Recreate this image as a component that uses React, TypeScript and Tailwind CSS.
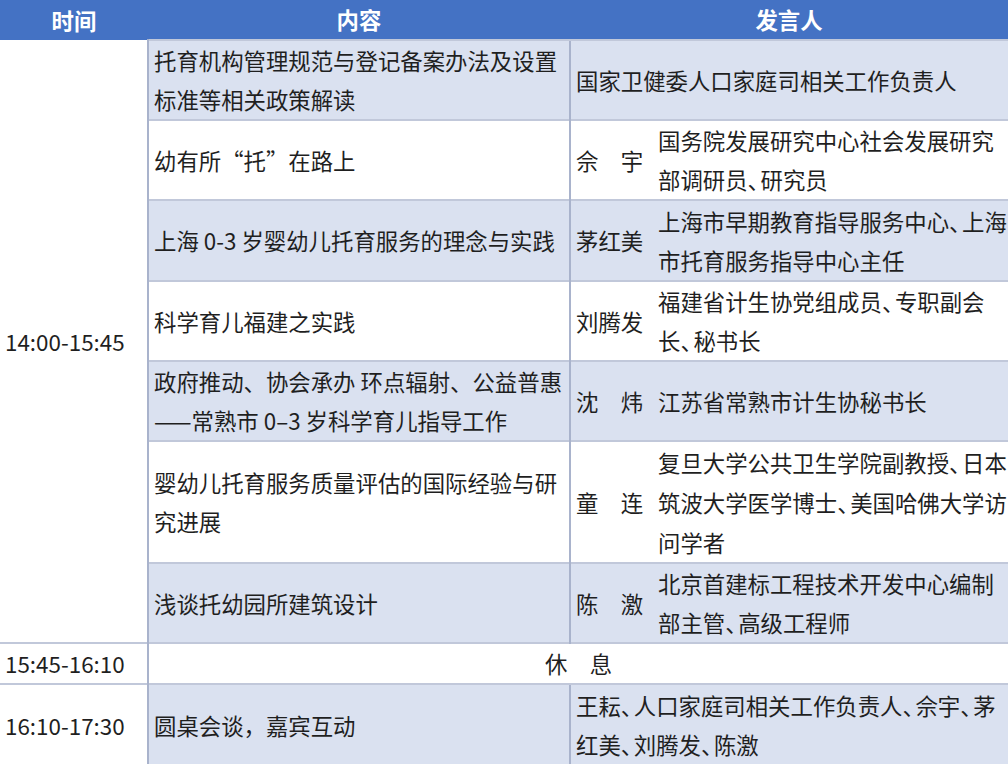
import React from 'react';

type Row = {
  content: string[];
  name?: string;
  desc: string[];
  h: string;
  blue: boolean;
};

const rows: Row[] = [
  {
    content: ['托育机构管理规范与登记备案办法及设置', '标准等相关政策解读'],
    desc: ['国家卫健委人口家庭司相关工作负责人'],
    h: 'h-[80px]',
    blue: true,
  },
  {
    content: ['幼有所“托”在路上'],
    name: '佘　宇',
    desc: ['国务院发展研究中心社会发展研究', '部调研员、研究员'],
    h: 'h-[80px]',
    blue: false,
  },
  {
    content: ['上海 0-3 岁婴幼儿托育服务的理念与实践'],
    name: '茅红美',
    desc: ['上海市早期教育指导服务中心、上海', '市托育服务指导中心主任'],
    h: 'h-[81px]',
    blue: true,
  },
  {
    content: ['科学育儿福建之实践'],
    name: '刘腾发',
    desc: ['福建省计生协党组成员、专职副会', '长、秘书长'],
    h: 'h-[80px]',
    blue: false,
  },
  {
    content: ['政府推动、协会承办 环点辐射、公益普惠', '——常熟市 0–3 岁科学育儿指导工作'],
    name: '沈　炜',
    desc: ['江苏省常熟市计生协秘书长'],
    h: 'h-[80px]',
    blue: true,
  },
  {
    content: ['婴幼儿托育服务质量评估的国际经验与研', '究进展'],
    name: '童　连',
    desc: ['复旦大学公共卫生学院副教授、日本', '筑波大学医学博士、美国哈佛大学访', '问学者'],
    h: 'h-[122px]',
    blue: false,
  },
  {
    content: ['浅谈托幼园所建筑设计'],
    name: '陈　激',
    desc: ['北京首建标工程技术开发中心编制', '部主管、高级工程师'],
    h: 'h-[80px]',
    blue: true,
  },
];

// 顿号在原图里比全角窄
const Line = ({ s }: { s: string }) => {
  const parts = s.split('、');
  return (
    <div className="whitespace-nowrap">
      {parts.map((p, i) => (
        <React.Fragment key={i}>
          {p}
          {i < parts.length - 1 && <span className="inline-block w-[13px]">、</span>}
        </React.Fragment>
      ))}
    </div>
  );
};

const cellBase = 'border-t-2 border-l-2 border-t-[#c1c8da] border-l-[#a9b3cc] align-middle';

export default function App() {
  return (
    <div className="w-[1008px] h-[764px] overflow-hidden bg-white font-['Noto_Sans_CJK_SC','Noto_Sans',sans-serif] text-[22.4px] leading-[39px] text-[#1f1f1f]">
      <table className="w-[1008px] table-fixed border-collapse">
        <colgroup>
          <col className="w-[148px]" />
          <col className="w-[422px]" />
          <col />
        </colgroup>
        <thead>
          <tr className="h-[40px] bg-[#4472c4] text-white">
            <th className="font-bold">时间</th>
            <th className="font-bold">内容</th>
            <th className="font-bold">发言人</th>
          </tr>
        </thead>
        <tbody>
          {rows.map((r, i) => (
            <tr key={i} className={r.h}>
              {i === 0 && (
                <td rowSpan={7} className="border-t-0 bg-white pl-[5px] align-middle">
                  14:00-15:45
                </td>
              )}
              <td className={`${cellBase} ${r.blue ? 'bg-[#dae1f0]' : 'bg-white'} pl-[5px] ${i === 0 ? 'border-t-0' : ''}`}>
                {r.content.map((c, j) => (
                  <div key={j} className="whitespace-nowrap">{c}</div>
                ))}
              </td>
              <td className={`${cellBase} ${r.blue ? 'bg-[#dae1f0]' : 'bg-white'} pl-[5px] ${i === 0 ? 'border-t-0' : ''}`}>
                {r.name ? (
                  <div className="flex items-center">
                    <div className="w-[82px] shrink-0 whitespace-nowrap">{r.name}</div>
                    <div className={r.desc.length === 3 ? 'leading-[40px]' : ''}>
                      {r.desc.map((d, j) => (
                        <Line key={j} s={d} />
                      ))}
                    </div>
                  </div>
                ) : (
                  <Line s={r.desc[0]} />
                )}
              </td>
            </tr>
          ))}
          <tr className="h-[40px]">
            <td className="border-t-2 border-t-[#c1c8da] bg-white pl-[5px] align-middle">15:45-16:10</td>
            <td colSpan={2} className={`${cellBase} bg-white text-center`}>
              休　息
            </td>
          </tr>
          <tr className="h-[81px]">
            <td className="border-t-2 border-t-[#c1c8da] bg-white pl-[5px] align-middle">16:10-17:30</td>
            <td className={`${cellBase} bg-[#dae1f0] pl-[5px]`}>圆桌会谈，嘉宾互动</td>
            <td className={`${cellBase} bg-[#dae1f0] pl-[5px]`}>
              <Line s="王耘、人口家庭司相关工作负责人、佘宇、茅" />
              <Line s="红美、刘腾发、陈激" />
            </td>
          </tr>
        </tbody>
      </table>
    </div>
  );
}
